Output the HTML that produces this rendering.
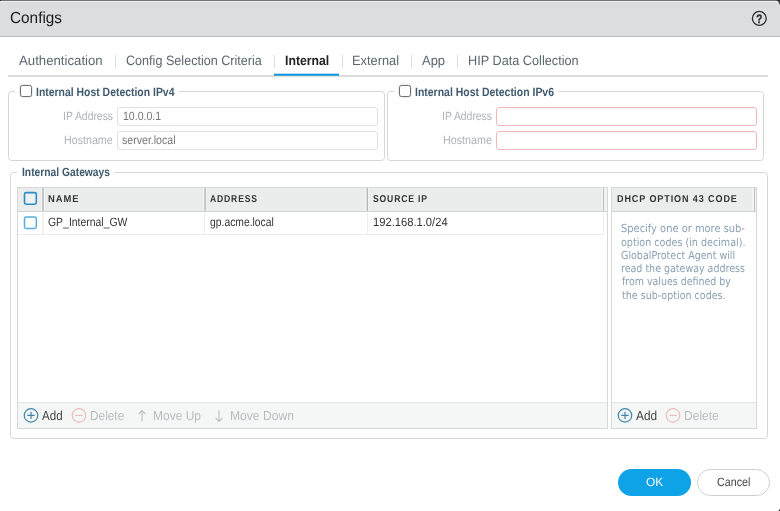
<!DOCTYPE html>
<html>
<head>
<meta charset="utf-8">
<title>Configs</title>
<style>
*{box-sizing:border-box;margin:0;padding:0}
html,body{width:780px;height:511px;overflow:hidden;background:#fff}
body{position:relative;font-family:"Liberation Sans",sans-serif;font-size:12px;color:#333}
.abs,.x{position:absolute}
.x{white-space:nowrap;line-height:16px;transform-origin:0 0;text-rendering:geometricPrecision}
#tl{position:absolute;left:0;top:0;width:780px;height:511px;will-change:transform}
#topline{left:0;top:0;width:780px;height:1px;background:#757575}
#topline2{left:0;top:1px;width:780px;height:1px;background:#eceded}
#hdr{left:0;top:2px;width:780px;height:34px;background:#dcdddf}
#hdrb{left:0;top:36px;width:780px;height:1px;background:#b9bdc0}
.sep{width:1px;height:13px;top:55px;background:#d9dee3}
#tabline{left:8px;top:75px;width:760px;height:2px;background:#dedede}
#tabact{left:274px;top:73px;width:65px;height:3px;background:linear-gradient(to bottom,#b9e0f6 0,#b9e0f6 33.33%,#0795e0 33.33%,#0795e0 66.66%,#47abdf 66.66%,#47abdf 100%)}
.fs{border:1px solid #d4d7da;border-radius:3.5px}
.gap{background:#fff}
.cb{width:12px;height:12px;border:1px solid #707070;border-radius:2.5px;background:#fff;box-shadow:0 0 0 0.5px rgba(120,120,120,.25)}
.inp{height:19px;border:1px solid #dfe1e2;border-radius:3px;background:#fff}
.inp.err{border-color:#f2b8b5}
.grid{border:1px solid #d5d7da;background:#fff}
.gh{background:#ebeded;border-bottom:1px solid #d0d3d5}
.cs{width:2px;border-left:1px solid #aeb1b4;background:#f6f7f7}
.gcb{width:14px;height:14px;border:2px solid #2d8dc5;border-radius:2.5px;background:#f1f2f3}
.tb{background:#f5f6f6;border-top:1px solid #e1e3e4}
.btn{height:27.3px;border-radius:14px}
</style>
</head>
<body>
<div class="abs" id="topline"></div>
<div class="abs" id="topline2"></div>
<div class="abs" id="hdr"></div>
<div class="abs" id="hdrb"></div>
<svg class="abs" style="left:750px;top:9px;will-change:transform" width="19" height="19" viewBox="0 0 19 19"><circle cx="9.3" cy="9.4" r="7.6" fill="none" stroke="#eceded" stroke-width="1.2"/><circle cx="9.3" cy="9.4" r="6.95" fill="none" stroke="#2b2b2b" stroke-width="1.35"/><text transform="translate(9.35 13.75) scale(0.8 1)" x="0" y="0" text-anchor="middle" style="font-family:'Liberation Sans',sans-serif;font-weight:bold;font-size:12.3px;text-rendering:geometricPrecision" fill="#262626" stroke="#262626" stroke-width="0.35">?</text></svg>

<!-- tabs -->
<div class="abs sep" style="left:115px"></div>
<div class="abs sep" style="left:274px"></div>
<div class="abs sep" style="left:342px"></div>
<div class="abs sep" style="left:411px"></div>
<div class="abs sep" style="left:457px"></div>
<div class="abs" id="tabline"></div>
<div class="abs" id="tabact"></div>

<!-- fieldset 1 -->
<div class="abs fs" style="left:8px;top:91px;width:377px;height:70px"></div>
<div class="abs gap" style="left:15px;top:84px;width:164px;height:15px"></div>
<div class="abs cb" style="left:20px;top:85px"></div>
<div class="abs inp" style="left:117px;top:107px;width:261px"></div>
<div class="abs inp" style="left:117px;top:131px;width:261px"></div>

<!-- fieldset 2 -->
<div class="abs fs" style="left:387px;top:91px;width:377px;height:70px"></div>
<div class="abs gap" style="left:394px;top:84px;width:164px;height:15px"></div>
<div class="abs cb" style="left:399px;top:85px"></div>
<div class="abs inp err" style="left:496px;top:107px;width:261px"></div>
<div class="abs inp err" style="left:496px;top:131px;width:261px"></div>

<!-- fieldset 3 -->
<div class="abs fs" style="left:10px;top:172px;width:758px;height:267px"></div>
<div class="abs gap" style="left:17px;top:165px;width:97px;height:15px"></div>

<!-- grid 1 -->
<div class="abs grid" style="left:17px;top:187px;width:591px;height:242px"></div>
<div class="abs gh" style="left:18px;top:188px;width:589px;height:24px"></div>
<svg class="abs" style="left:22px;top:190px" width="17" height="17" viewBox="0 0 17 17"><rect x="2.5" y="2.6" width="11.8" height="11.6" rx="1.6" fill="#eff0f1" stroke="#2b8dc6" stroke-width="1.6"/></svg>
<div class="abs" style="left:41px;top:188px;width:4px;height:23px;background:linear-gradient(to right,#f3f4f5 0% 25%,#c4c7ca 25% 50%,#c4c7ca 50% 75%,#f3f4f5 75% 100%)"></div>
<div class="abs" style="left:203px;top:188px;width:4px;height:23px;background:linear-gradient(to right,#f3f4f5 0% 25%,#cacdd0 25% 50%,#bfc2c5 50% 75%,#f3f4f5 75% 100%)"></div>
<div class="abs" style="left:365px;top:188px;width:4px;height:23px;background:linear-gradient(to right,#f3f4f5 0% 25%,#d8dadc 25% 50%,#b3b7ba 50% 75%,#f3f4f5 75% 100%)"></div>
<div class="abs" style="left:602px;top:188px;width:5px;height:23px;background:linear-gradient(to right,#f3f4f5 0% 20%,#b9bcbf 20% 40%,#f1f2f2 40% 60%,#f2f3f3 60% 80%,#f2f3f3 80% 100%)"></div>
<!-- row -->
<div class="abs" style="left:18px;top:234px;width:586px;height:1px;background:#e9ebec"></div>
<div class="abs" style="left:42px;top:213px;width:2px;height:21px;background:#f1f2f3"></div>
<div class="abs" style="left:204px;top:213px;width:1px;height:21px;background:#ebedee"></div>
<div class="abs" style="left:367px;top:213px;width:1px;height:21px;background:#ebedee"></div>
<div class="abs" style="left:603px;top:213px;width:1px;height:21px;background:#eceeef"></div>
<svg class="abs" style="left:22px;top:214px" width="17" height="17" viewBox="0 0 17 17"><rect x="2.5" y="3.05" width="11.8" height="11.4" rx="1.6" fill="#fff" stroke="#56addf" stroke-width="1.5"/></svg>
<!-- toolbar 1 -->
<div class="abs tb" style="left:18px;top:402px;width:589px;height:26px"></div>
<svg class="abs" style="left:22.9px;top:408.2px" width="16" height="16" viewBox="0 0 16 16"><circle cx="8" cy="7.4" r="6.75" fill="none" stroke="#3f86ab" stroke-width="1.2"/><path d="M4.3 7.4h7.4M8 3.7v7.4" stroke="#3f86ab" stroke-width="1.2" fill="none"/></svg>
<svg class="abs" style="left:70.9px;top:408.2px" width="16" height="16" viewBox="0 0 16 16"><circle cx="8" cy="7.4" r="6.75" fill="none" stroke="#ecbcbc" stroke-width="1.2"/><path d="M4.3 7.4h7.4" stroke="#ecbcbc" stroke-width="1.2" fill="none"/></svg>
<svg class="abs" style="left:136.3px;top:409px" width="12" height="14" viewBox="0 0 12 14"><path d="M6 12.5V1.8M2.6 5.2L6 1.6l3.4 3.6" stroke="#b9bcbf" stroke-width="1.1" fill="none"/></svg>
<svg class="abs" style="left:212.7px;top:409px" width="12" height="14" viewBox="0 0 12 14"><path d="M6 1.5v10.7M2.6 8.8L6 12.4l3.4-3.6" stroke="#b9bcbf" stroke-width="1.1" fill="none"/></svg>

<!-- grid 2 -->
<div class="abs grid" style="left:611px;top:187px;width:146px;height:242px"></div>
<div class="abs gh" style="left:612px;top:188px;width:144px;height:24px"></div>
<div class="abs" style="left:752px;top:188px;width:4px;height:23px;background:linear-gradient(to right,#f1f2f2 0% 25%,#f3f4f5 25% 50%,#bec1c4 50% 75%,#f1f2f2 75% 100%)"></div>
<div class="abs tb" style="left:612px;top:402px;width:144px;height:26px"></div>
<svg class="abs" style="left:616.7px;top:408.2px" width="16" height="16" viewBox="0 0 16 16"><circle cx="8" cy="7.4" r="6.75" fill="none" stroke="#3f86ab" stroke-width="1.2"/><path d="M4.3 7.4h7.4M8 3.7v7.4" stroke="#3f86ab" stroke-width="1.2" fill="none"/></svg>
<svg class="abs" style="left:665.3px;top:408.2px" width="16" height="16" viewBox="0 0 16 16"><circle cx="8" cy="7.4" r="6.75" fill="none" stroke="#ecbcbc" stroke-width="1.2"/><path d="M4.3 7.4h7.4" stroke="#ecbcbc" stroke-width="1.2" fill="none"/></svg>

<!-- buttons -->
<div class="abs btn" style="left:617.8px;top:468.6px;width:73.6px;background:#0ea2e6"></div>
<div class="abs btn" style="left:697px;top:468.6px;width:73.4px;background:#fff;border:1px solid #cdd0d3"></div>
<svg class="abs" style="left:0;top:0" width="780" height="511" viewBox="0 0 780 511"><path d="M0 0h1.2v1H0z" fill="#333"/><path d="M776.6 0H780v4.2h-.8V2.2h-1V1h-1.6z" fill="#303030"/><path d="M779 509.4h1V511h-1.3z" fill="#333"/></svg>

<div id="tl">
<div class="x " style="left:10.01px;top:11.46px;font-size:16px;color:#1a1a1a;transform:scaleX(0.9583);">Configs</div>
<div class="x " style="left:19.49px;top:53.02px;font-size:13.5px;color:#5b6770;transform:scaleX(0.9782);">Authentication</div>
<div class="x " style="left:125.91px;top:53.02px;font-size:13.5px;color:#5b6770;transform:scaleX(0.9333);">Config Selection Criteria</div>
<div class="x " style="left:285.04px;top:53.02px;font-size:13.5px;color:#222;transform:scaleX(0.9076);font-weight:bold;">Internal</div>
<div class="x " style="left:352.10px;top:53.02px;font-size:13.5px;color:#5b6770;transform:scaleX(0.9493);">External</div>
<div class="x " style="left:421.60px;top:53.02px;font-size:13.5px;color:#5b6770;transform:scaleX(0.9611);">App</div>
<div class="x " style="left:468.31px;top:53.02px;font-size:13.5px;color:#5b6770;transform:scaleX(0.9411);">HIP Data Collection</div>
<div class="x " style="left:36.21px;top:83.84px;font-size:12px;color:#3f596d;transform:scaleX(0.8686);font-weight:bold;">Internal Host Detection IPv4</div>
<div class="x " style="left:415.42px;top:83.84px;font-size:12px;color:#3f596d;transform:scaleX(0.8722);font-weight:bold;">Internal Host Detection IPv6</div>
<div class="x " style="left:62.59px;top:107.84px;font-size:12px;color:#adb3b9;transform:scaleX(0.8653);">IP Address</div>
<div class="x " style="left:63.70px;top:131.56px;font-size:12px;color:#adb3b9;transform:scaleX(0.8901);">Hostname</div>
<div class="x " style="left:441.97px;top:107.84px;font-size:12px;color:#adb3b9;transform:scaleX(0.8649);">IP Address</div>
<div class="x " style="left:442.54px;top:131.84px;font-size:12px;color:#adb3b9;transform:scaleX(0.8949);">Hostname</div>
<div class="x " style="left:123.20px;top:107.59px;font-size:12px;color:#777;transform:scaleX(0.8800);">10.0.0.1</div>
<div class="x " style="left:122.44px;top:131.84px;font-size:12px;color:#777;transform:scaleX(0.8821);">server.local</div>
<div class="x " style="left:22.48px;top:163.84px;font-size:12px;color:#3f596d;transform:scaleX(0.8568);font-weight:bold;">Internal Gateways</div>
<div class="x " style="left:47.80px;top:191.73px;font-size:10px;color:#333;transform:scaleX(0.9444);font-weight:bold;letter-spacing:1px;">NAME</div>
<div class="x " style="left:210.37px;top:191.73px;font-size:10px;color:#333;transform:scaleX(0.8560);font-weight:bold;letter-spacing:1px;">ADDRESS</div>
<div class="x " style="left:373.03px;top:191.73px;font-size:10px;color:#333;transform:scaleX(0.8577);font-weight:bold;letter-spacing:1px;">SOURCE IP</div>
<div class="x " style="left:616.58px;top:191.57px;font-size:10px;color:#333;transform:scaleX(0.9022);font-weight:bold;letter-spacing:1px;">DHCP OPTION 43 CODE</div>
<div class="x " style="left:47.98px;top:213.94px;font-size:12px;color:#333;transform:scaleX(0.8696);">GP_Internal_GW</div>
<div class="x " style="left:209.93px;top:213.94px;font-size:12px;color:#333;transform:scaleX(0.8623);">gp.acme.local</div>
<div class="x " style="left:372.60px;top:213.94px;font-size:12px;color:#333;transform:scaleX(0.9319);">192.168.1.0/24</div>
<div class="x " style="left:42.26px;top:407.50px;font-size:13px;color:#444;transform:scaleX(0.8908);">Add</div>
<div class="x " style="left:89.73px;top:407.50px;font-size:13px;color:#b9bcbf;transform:scaleX(0.9114);">Delete</div>
<div class="x " style="left:152.97px;top:407.50px;font-size:13px;color:#b9bcbf;transform:scaleX(0.9236);">Move Up</div>
<div class="x " style="left:229.65px;top:407.50px;font-size:13px;color:#b9bcbf;transform:scaleX(0.9305);">Move Down</div>
<div class="x " style="left:635.81px;top:407.50px;font-size:13px;color:#444;transform:scaleX(0.9122);">Add</div>
<div class="x " style="left:683.50px;top:407.50px;font-size:13px;color:#b9bcbf;transform:scaleX(0.9264);">Delete</div>
<div class="x " style="left:646.42px;top:473.84px;font-size:12px;color:#fff;transform:scaleX(0.9923);">OK</div>
<div class="x " style="left:716.79px;top:473.84px;font-size:12px;color:#444;transform:scaleX(0.8928);">Cancel</div>
<div class="x " style="left:621.49px;top:220.59px;font-size:11px;color:#8aa1b5;transform:scaleX(0.8988);font-family:'DejaVu Sans','Liberation Sans',sans-serif;">Specify one or more sub-</div>
<div class="x " style="left:621.38px;top:234.84px;font-size:11px;color:#8aa1b5;transform:scaleX(0.8702);font-family:'DejaVu Sans','Liberation Sans',sans-serif;">option codes (in decimal).</div>
<div class="x " style="left:621.05px;top:248.09px;font-size:11px;color:#8aa1b5;transform:scaleX(0.8668);font-family:'DejaVu Sans','Liberation Sans',sans-serif;">GlobalProtect Agent will</div>
<div class="x " style="left:621.49px;top:261.34px;font-size:11px;color:#8aa1b5;transform:scaleX(0.8630);font-family:'DejaVu Sans','Liberation Sans',sans-serif;">read the gateway address</div>
<div class="x " style="left:622.10px;top:273.59px;font-size:11px;color:#8aa1b5;transform:scaleX(0.8585);font-family:'DejaVu Sans','Liberation Sans',sans-serif;">from values defined by</div>
<div class="x " style="left:621.68px;top:287.84px;font-size:11px;color:#8aa1b5;transform:scaleX(0.8670);font-family:'DejaVu Sans','Liberation Sans',sans-serif;">the sub-option codes.</div>
</div>
</body>
</html>
